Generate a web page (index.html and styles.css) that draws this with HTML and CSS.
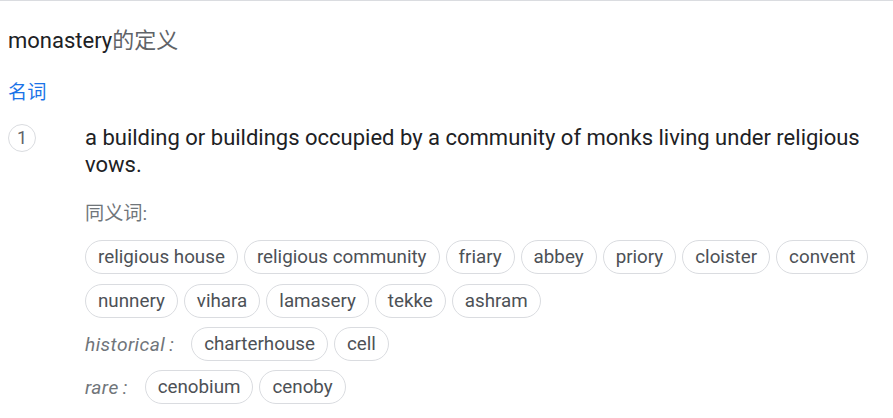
FILE: index.html
```html
<!DOCTYPE html>
<html lang="zh">
<head>
<meta charset="utf-8">
<link rel="stylesheet" href="styles.css">
</head>
<body>
<div class="page">
  <h1 class="title"><span class="word">monastery</span><span class="cjk">的定义</span></h1>
  <div class="pos">名词</div>
  <div class="sense">
    <div class="num">1</div>
    <div class="body">
      <div class="def">a building or buildings occupied by a community of monks living under religious vows.</div>
      <div class="synlabel">同义词:</div>
      <div class="chips">
        <span class="chip">religious house</span>
        <span class="chip">religious community</span>
        <span class="chip">friary</span>
        <span class="chip">abbey</span>
        <span class="chip">priory</span>
        <span class="chip">cloister</span>
        <span class="chip">convent</span>
        <span class="chip">nunnery</span>
        <span class="chip">vihara</span>
        <span class="chip">lamasery</span>
        <span class="chip">tekke</span>
        <span class="chip">ashram</span>
      </div>
      <div class="chips">
        <span class="reg">historical<span class="colon">:</span></span>
        <span class="chip">charterhouse</span>
        <span class="chip">cell</span>
      </div>
      <div class="chips">
        <span class="reg">rare<span class="colon">:</span></span>
        <span class="chip">cenobium</span>
        <span class="chip">cenoby</span>
      </div>
    </div>
  </div>
</div>
</body>
</html>
```
FILE: styles.css
```css
html, body {
  margin: 0;
  padding: 0;
  background: #fff;
}
body {
  font-family: Roboto, "Noto Sans CJK SC", Arial, sans-serif;
  color: #202124;
}
.page {
  border-top: 1px solid #dadce0;
  padding: 0 8px;
}
.title {
  margin: 0;
  padding-top: 26px;
  font-size: 22px;
  font-weight: 400;
  line-height: 28px;
  color: #202124;
}
.title .cjk {
  color: #5f6368;
}
.pos {
  margin-top: 26px;
  font-size: 19.2px;
  line-height: 24px;
  color: #1a73e8;
}
.sense {
  display: flex;
  margin-top: 19px;
}
.num {
  flex: none;
  width: 26px;
  height: 26px;
  border: 1px solid #dadce0;
  border-radius: 50%;
  font-size: 18px;
  line-height: 26px;
  text-align: center;
  color: #5f6368;
  margin-top: 0;
}
.body {
  margin-left: 49px;
  flex: 1;
}
.def {
  font-size: 22px;
  line-height: 27px;
  color: #202124;
}
.synlabel {
  margin-top: 24px;
  font-size: 19.2px;
  line-height: 24px;
  color: #70757a;
}
.chips {
  display: flex;
  flex-wrap: wrap;
  align-items: center;
  gap: 10px 6px;
  margin-top: 14px;
}
.chips + .chips {
  margin-top: 9px;
}
.chip {
  display: inline-flex;
  align-items: center;
  height: 34px;
  box-sizing: border-box;
  padding: 0 12px;
  border: 1px solid #dadce0;
  border-radius: 17px;
  font-size: 18.8px;
  color: #4d5156;
  white-space: nowrap;
}
.reg {
  font-size: 19.2px;
  font-style: italic;
  color: #70757a;
  margin-right: 11px;
  letter-spacing: 0.4px;
}
.colon {
  margin-left: 4px;
}
```
